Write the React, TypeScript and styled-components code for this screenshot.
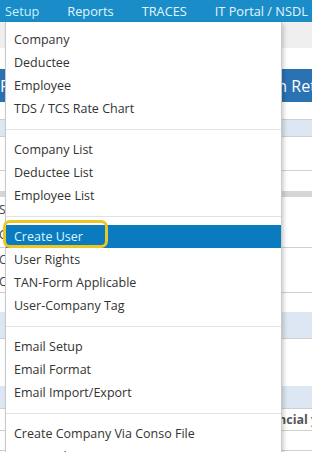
import React from "react";
import styled, { createGlobalStyle } from "styled-components";

const GlobalStyle = createGlobalStyle`
  html, body {
    margin: 0;
    padding: 0;
    overflow: hidden;
    background: #ffffff;
  }
  body {
    font-family: "Open Sans", "Noto Sans", "Liberation Sans", sans-serif;
  }
`;

type RowSpec = {
  height: number;
  tone?: "white" | "blue" | "gray";
  lead?: string;
  tail?: string;
  lined?: boolean;
};

const rows: RowSpec[] = [
  { height: 18, lined: true },
  { height: 17, tone: "blue", lined: true },
  { height: 12 },
  { height: 22, lined: true },
  { height: 20 },
  { height: 6, tone: "gray" },
  { height: 24, lead: "Select" },
  { height: 27, lead: "Company", lined: true },
  { height: 23, lead: "Company" },
  { height: 22, lead: "Company", lined: true },
  { height: 19 },
  { height: 27, tone: "blue", lined: true },
  { height: 47 },
  { height: 23, tone: "blue", lined: true },
  { height: 22, tail: "Select financial year", lined: true },
  { height: 20, lined: true },
];

const setupItems: (string | null)[] = [
  "Company",
  "Deductee",
  "Employee",
  "TDS / TCS Rate Chart",
  null,
  "Company List",
  "Deductee List",
  "Employee List",
  null,
  "Create User",
  "User Rights",
  "TAN-Form Applicable",
  "User-Company Tag",
  null,
  "Email Setup",
  "Email Format",
  "Email Import/Export",
  null,
  "Create Company Via Conso File",
  "Conso File Import",
];

export default function App() {
  return (
    <>
      <GlobalStyle />
      <Page>
        <NavBar>
          <NavItem $open>Setup</NavItem>
          <NavItem>Reports</NavItem>
          <NavItem>TRACES</NavItem>
          <NavItem>IT Portal / NSDL</NavItem>
        </NavBar>
        <Toolbar />
        <Spacer />
        <TitleBar>
          <TitleCell $width={203}>Form 26Q</TitleCell>
          <TitleCell>Conversion Return</TitleCell>
        </TitleBar>
        <Table>
          {rows.map((r, i) => (
            <TableRow key={i} $height={r.height} $tone={r.tone || "white"} $lined={!!r.lined}>
              {r.lead && <LeadText>{r.lead}</LeadText>}
              {r.tail && <TailText>{r.tail}</TailText>}
            </TableRow>
          ))}
        </Table>

        <Dropdown>
          {setupItems.map((label, i) =>
            label === null ? (
              <Separator key={i} />
            ) : (
              <MenuItem key={i} $active={label === "Create User"}>
                {label}
                {label === "Create User" && <Marker />}
              </MenuItem>
            )
          )}
        </Dropdown>
      </Page>
    </>
  );
}

const Page = styled.div`
  position: relative;
  width: 312px;
  height: 452px;
  overflow: hidden;
  display: flex;
  flex-direction: column;
`;

const NavBar = styled.div`
  height: 22px;
  background: #1a8cc8;
  display: flex;
  align-items: center;
  padding-left: 5px;
  gap: 28px;
  white-space: nowrap;
`;

const NavItem = styled.span<{ $open?: boolean }>`
  font-size: 12.75px;
  line-height: 22px;
  color: ${p => (p.$open ? "#c9f3ff" : "#e2f7ff")};
`;

const Toolbar = styled.div`
  height: 26px;
  background: #efefef;
`;

const Spacer = styled.div`
  height: 21px;
  background: #ffffff;
`;

const TitleBar = styled.div`
  height: 33px;
  background: #2b72b3;
  display: flex;
  align-items: center;
  white-space: nowrap;
  overflow: hidden;
`;

const TitleCell = styled.span<{ $width?: number }>`
  flex: 0 0 ${p => (p.$width ? `${p.$width}px` : "auto")};
  color: #ffffff;
  font-size: 16px;
  padding-left: 0;
`;

const Table = styled.div`
  display: flex;
  flex-direction: column;
`;

const toneColor = {
  white: "#ffffff",
  blue: "#dde7f3",
  gray: "#d6d6d6",
};

const TableRow = styled.div<{ $height: number; $tone: keyof typeof toneColor; $lined: boolean }>`
  flex: 0 0 ${p => p.$height}px;
  box-sizing: border-box;
  background: ${p => toneColor[p.$tone]};
  border-bottom: ${p => (p.$lined ? "1px solid #cfcfcf" : "none")};
  display: flex;
  align-items: center;
  white-space: nowrap;
  overflow: hidden;
`;

const LeadText = styled.span`
  font-size: 12px;
  color: #444;
  margin-left: -1px;
`;

const TailText = styled.span`
  font-size: 12.5px;
  font-weight: 700;
  color: #555;
  margin-left: 213px;
`;

const Dropdown = styled.div`
  position: absolute;
  top: 22px;
  left: 5px;
  width: 277px;
  box-sizing: border-box;
  background: #ffffff;
  border: 1px solid #c9c9c9;
  border-top: none;
  box-shadow: 2px 2px 4px rgba(0, 0, 0, 0.18);
  padding-top: 6px;
`;

const MenuItem = styled.div<{ $active?: boolean }>`
  position: relative;
  height: 23px;
  line-height: 23px;
  padding-left: 8px;
  font-size: 12.5px;
  white-space: nowrap;
  color: ${p => (p.$active ? "#dff6ff" : "#333333")};
  background: ${p => (p.$active ? "#0a7bbf" : "transparent")};
`;

const Separator = styled.div`
  height: 1px;
  background: #e2e2e2;
  margin: 9px 0 8px;
`;

const Marker = styled.span`
  position: absolute;
  left: -3px;
  top: -5px;
  width: 105px;
  height: 28px;
  box-sizing: border-box;
  border: 3px solid #ecc526;
  border-radius: 7px;
`;
